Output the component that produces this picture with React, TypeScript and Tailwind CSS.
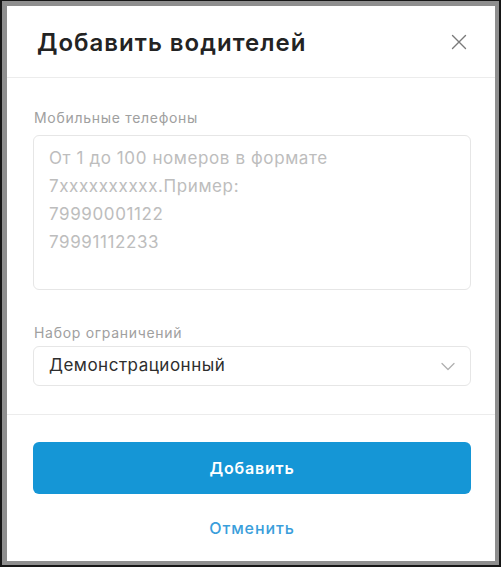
export default function App() {
  return (
    <div className="w-[501px] h-[567px] bg-[#161616] pl-[2px] pt-[1px] pr-[2px] pb-[2px] font-['Inter','Noto_Sans',sans-serif]">
      <div className="h-full bg-[#8e8e8e] pl-[5px] pt-[5px] pr-[4px] pb-[4px]">
        <div className="h-full bg-white flex flex-col">
          {/* Header */}
          <div className="h-[72px] shrink-0 flex items-center justify-between pl-[30px] pr-[27px] border-b border-[#ececec]">
            <h2 className="text-[24px] font-semibold text-[#232323] tracking-[1px] pt-[2px]">
              Добавить водителей
            </h2>
            <button className="w-[18px] h-[18px] flex items-center justify-center text-[#7a7a7a]">
              <svg width="16" height="16" viewBox="0 0 16 16" fill="none" stroke="currentColor" strokeWidth="1.4" strokeLinecap="round">
                <path d="M1.5 1.5l13 13M14.5 1.5l-13 13" />
              </svg>
            </button>
          </div>

          {/* Body */}
          <div className="pl-[26px] pr-[24px] pt-[32px] pb-[28px] border-b border-[#ececec]">
            <label className="block text-[14px] leading-[16px] tracking-[0.7px] text-[#a0a0a0] mb-[9px] pl-px">
              Мобильные телефоны
            </label>
            <textarea
              className="block w-full h-[155px] resize-none rounded-[6px] border border-[#e6e6e6] pl-[15px] pt-[8px] text-[17px] leading-[28px] tracking-[0.6px] text-[#333] placeholder:text-[#bdbdbd] outline-none"
              placeholder={"От 1 до 100 номеров в формате\n7xxxxxxxxxx.Пример:\n79990001122\n79991112233"}
            />

            <label className="block text-[14px] leading-[16px] tracking-[0.7px] text-[#a0a0a0] mt-[35px] mb-[5px] pl-px">
              Набор ограничений
            </label>
            <div className="h-[40px] rounded-[6px] border border-[#e6e6e6] flex items-center justify-between pl-[15px] pr-[15px]">
              <span className="text-[17px] tracking-[0.5px] text-[#2e2e2e]">Демонстрационный</span>
              <svg width="14" height="9" viewBox="0 0 14 9" fill="none" stroke="#b0b0b0" strokeWidth="1.3" strokeLinecap="round" strokeLinejoin="round">
                <path d="M1 1.5l6 6 6-6" />
              </svg>
            </div>
          </div>

          {/* Footer */}
          <div className="pl-[26px] pr-[24px] pt-[27px] flex flex-col items-center">
            <button className="w-full h-[52px] rounded-[6px] bg-[#1596d6] text-white text-[16px] tracking-[0.8px] font-semibold">
              Добавить
            </button>
            <button className="mt-[22px] text-[16px] tracking-[0.9px] font-medium text-[#3a9edb]">
              Отменить
            </button>
          </div>
        </div>
      </div>
    </div>
  );
}
